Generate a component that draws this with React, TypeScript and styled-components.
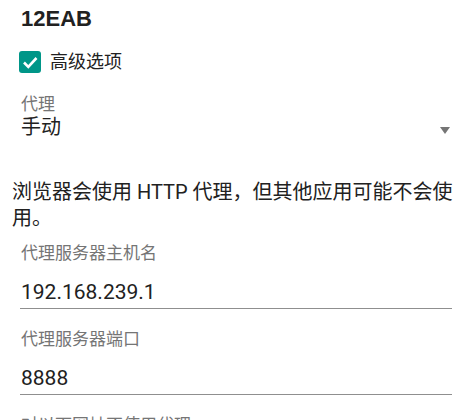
import React from 'react';
import styled, { createGlobalStyle } from 'styled-components';

const GlobalStyle = createGlobalStyle`
  html, body {
    margin: 0;
    padding: 0;
    background: #ffffff;
    overflow: hidden;
  }
  body {
    font-family: Roboto, "Noto Sans CJK SC", sans-serif;
    color: #212121;
  }
`;

const Page = styled.div`
  width: 474px;
  height: 420px;
  overflow: hidden;
  display: flex;
  flex-direction: column;
`;

const Title = styled.h1`
  margin: 0;
  padding: 4px 0 0 21px;
  font-family: "Liberation Sans", Arial, sans-serif;
  font-size: 22px;
  line-height: 30px;
  font-weight: 700;
  color: #212121;
`;

const CheckRow = styled.label`
  display: flex;
  align-items: center;
  gap: 9px;
  margin: 16px 0 0 19px;
  font-size: 18px;
  line-height: 24px;
  color: #212121;
`;

const Box = styled.span`
  width: 22px;
  height: 22px;
  border-radius: 3px;
  background: #009688;
  display: flex;
  align-items: center;
  justify-content: center;
`;

const Spinner = styled.div`
  margin: 20px 0 0 21px;
  padding-right: 24px;
  display: flex;
  flex-direction: column;
`;

const SmallLabel = styled.div<{ $indent?: number }>`
  font-size: 17px;
  line-height: 20px;
  color: #757575;
  padding-left: ${p => p.$indent ?? 0}px;
`;

const SpinnerRow = styled.div`
  display: flex;
  align-items: center;
  justify-content: space-between;
  font-size: 20px;
  line-height: 26px;
  color: #212121;
`;

const Arrow = styled.span`
  width: 0;
  height: 0;
  border-left: 5.5px solid transparent;
  border-right: 5.5px solid transparent;
  border-top: 7px solid #757575;
  margin-top: 6px;
`;

const Note = styled.p`
  margin: 39px 0 0 12px;
  width: 450px;
  font-size: 20px;
  line-height: 26px;
  color: #212121;
`;

const TextField = styled.div<{ $top: number }>`
  margin: ${p => p.$top}px 22px 0 20px;
  display: flex;
  flex-direction: column;
`;

const Value = styled.div`
  padding: 16px 0 3px 1px;
  font-size: 21px;
  line-height: 26px;
  color: #212121;
  border-bottom: 1px solid #8f8f8f;
`;

const App: React.FC = () => {
  return (
    <Page>
      <GlobalStyle />
      <Title>12EAB</Title>
      <CheckRow>
        <Box>
          <svg width="22" height="22" viewBox="0 0 22 22">
            <path d="M5 11.5l4.3 4.3L17.5 7" fill="none" stroke="#fff" strokeWidth="2.6" />
          </svg>
        </Box>
        高级选项
      </CheckRow>
      <Spinner>
        <SmallLabel>代理</SmallLabel>
        <SpinnerRow>
          手动
          <Arrow />
        </SpinnerRow>
      </Spinner>
      <Note>浏览器会使用 HTTP 代理，但其他应用可能不会使用。</Note>
      <TextField $top={12}>
        <SmallLabel $indent={1}>代理服务器主机名</SmallLabel>
        <Value>192.168.239.1</Value>
      </TextField>
      <TextField $top={20}>
        <SmallLabel $indent={1}>代理服务器端口</SmallLabel>
        <Value>8888</Value>
      </TextField>
      <TextField $top={20}>
        <SmallLabel $indent={1}>对以下网址不使用代理</SmallLabel>
      </TextField>
    </Page>
  );
};

export default App;
